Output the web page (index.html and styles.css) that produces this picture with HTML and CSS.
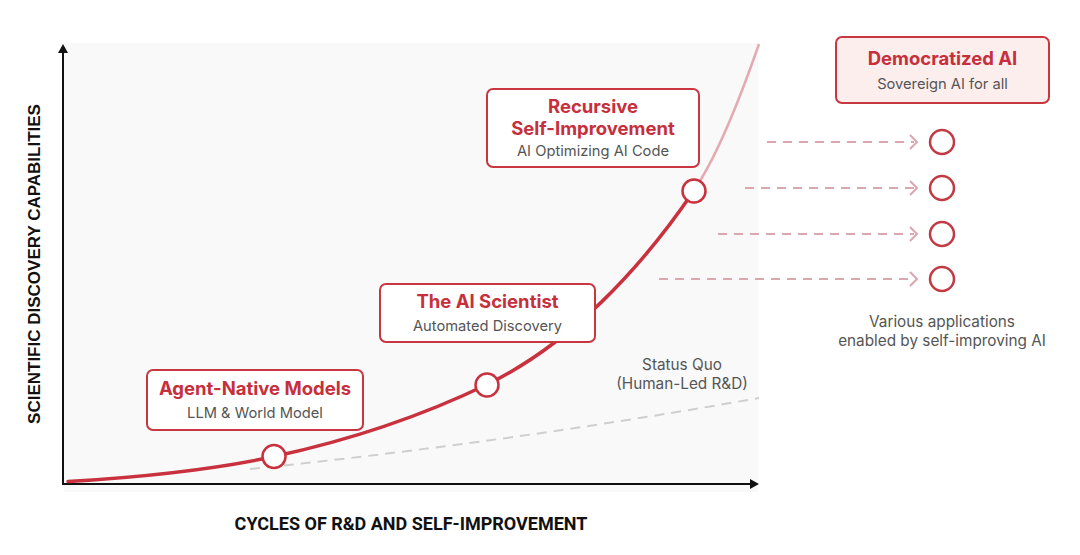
FILE: index.html
```html
<!DOCTYPE html>
<html lang="en">
<head>
<meta charset="utf-8">
<title>Recursive Self-Improvement</title>
<link rel="stylesheet" href="styles.css">
</head>
<body>
<div class="stage">
  <svg class="plot" width="1080" height="555" viewBox="0 0 1080 555" xmlns="http://www.w3.org/2000/svg">
    <rect x="64" y="43" width="694" height="449" fill="#f9f9f9"/>
    <!-- status quo -->
    <path d="M250 469 Q504 443 759 398" fill="none" stroke="#cfcfcf" stroke-width="2" stroke-dasharray="10 7"/>
    <!-- axes -->
    <line x1="63" y1="52" x2="63" y2="485" stroke="#111" stroke-width="2"/>
    <path d="M58 53 L63 44 L68 53 Z" fill="#111"/>
    <line x1="62" y1="484" x2="751" y2="484" stroke="#111" stroke-width="2"/>
    <path d="M750 479 L759 484 L750 489 Z" fill="#111"/>
    <!-- pink continuation -->
    <path d="M694 190 Q722 150 759 44" fill="none" stroke="#e4aab2" stroke-width="2.5"/>
    <!-- main curve -->
    <path d="M68 481.5 C160 476 230 466 274 456.5 C360 438 430 412 487 384.5 C570 344 640 270 694 190.5" fill="none" stroke="#c8313d" stroke-width="3.5" stroke-linejoin="round" stroke-linecap="round"/>
    <!-- milestone circles -->
    <circle cx="274" cy="456.5" r="11.5" fill="#fff" stroke="#c8313d" stroke-width="2.5"/>
    <circle cx="487" cy="385" r="11.5" fill="#fff" stroke="#c8313d" stroke-width="2.5"/>
    <circle cx="694" cy="191" r="11.5" fill="#fff" stroke="#c8313d" stroke-width="2.5"/>
    <!-- application arrows -->
    <g fill="none" stroke="#dba6ad" stroke-width="2">
      <line x1="767" y1="142" x2="914" y2="142" stroke-dasharray="9 7"/>
      <line x1="745" y1="188" x2="914" y2="188" stroke-dasharray="9 7"/>
      <line x1="718" y1="234" x2="914" y2="234" stroke-dasharray="9 7"/>
      <line x1="659" y1="279" x2="914" y2="279" stroke-dasharray="9 7"/>
      <path d="M910 135 L917 142 L910 149"/>
      <path d="M910 181 L917 188 L910 195"/>
      <path d="M910 227 L917 234 L910 241"/>
      <path d="M910 272 L917 279 L910 286"/>
    </g>
    <g fill="#fff" stroke="#c23a44" stroke-width="2.5">
      <circle cx="942" cy="142" r="12"/>
      <circle cx="942" cy="188" r="12"/>
      <circle cx="942" cy="234" r="12"/>
      <circle cx="942" cy="279" r="12"/>
    </g>
  </svg>

  <div class="axis-label axis-y">SCIENTIFIC DISCOVERY CAPABILITIES</div>
  <div class="axis-label axis-x">CYCLES OF R&amp;D AND SELF-IMPROVEMENT</div>

  <div class="node node-agent">
    <div class="node-title">Agent-Native Models</div>
    <div class="node-sub">LLM &amp; World Model</div>
  </div>
  <div class="node node-scientist">
    <div class="node-title">The AI Scientist</div>
    <div class="node-sub">Automated Discovery</div>
  </div>
  <div class="node node-recursive">
    <div class="node-title">Recursive<br>Self-Improvement</div>
    <div class="node-sub">AI Optimizing AI Code</div>
  </div>
  <div class="node node-democratized">
    <div class="node-title">Democratized AI</div>
    <div class="node-sub">Sovereign AI for all</div>
  </div>

  <div class="note note-status">Status Quo<br>(Human-Led R&amp;D)</div>
  <div class="note note-apps">Various applications<br>enabled by self-improving AI</div>
</div>
</body>
</html>
```

FILE: styles.css
```css
html, body {
  margin: 0;
  padding: 0;
  background: #ffffff;
}

.stage {
  position: relative;
  width: 1080px;
  height: 555px;
  overflow: hidden;
  font-family: Inter, "Noto Sans", "Liberation Sans", sans-serif;
}

.plot {
  position: absolute;
  left: 0;
  top: 0;
  display: block;
}

.axis-label {
  position: absolute;
  font-weight: 700;
  color: #111;
  white-space: nowrap;
  line-height: 20px;
}

.axis-y {
  font-family: "Liberation Sans", Arial, sans-serif;
  font-size: 17px;
  left: 35px;
  top: 264px;
  transform: translate(-50%, -50%) rotate(-90deg);
}

.axis-x {
  font-family: Roboto, "Liberation Sans", sans-serif;
  font-size: 18px;
  left: 411px;
  top: 524px;
  transform: translate(-50%, -50%);
}

.node {
  position: absolute;
  box-sizing: border-box;
  border: 2px solid #c8363f;
  border-radius: 7px;
  background: #ffffff;
  display: flex;
  flex-direction: column;
  align-items: center;
  justify-content: center;
  text-align: center;
}

.node-title {
  font-size: 18.5px;
  font-weight: 700;
  color: #c62f3b;
  line-height: 22px;
}

.node-sub {
  font-size: 14.7px;
  font-weight: 400;
  color: #555555;
  line-height: 20px;
  margin-top: 4px;
}

.node-recursive .node-sub {
  margin-top: 2px;
}

.node-agent {
  left: 146px;
  top: 369px;
  width: 218px;
  height: 62px;
}

.node-scientist {
  left: 379px;
  top: 283px;
  width: 217px;
  height: 60px;
}

.node-recursive {
  left: 486px;
  top: 88px;
  width: 214px;
  height: 80px;
}

.node-democratized {
  left: 835px;
  top: 36px;
  width: 215px;
  height: 68px;
  background: #fdeeee;
}

.node-democratized .node-sub {
  margin-top: 5px;
}

.note {
  position: absolute;
  font-size: 15.3px;
  line-height: 19px;
  color: #555555;
  text-align: center;
  white-space: nowrap;
  transform: translateX(-50%);
}

.note-status {
  left: 682px;
  top: 355px;
}

.note-apps {
  left: 942px;
  top: 312px;
}
```
